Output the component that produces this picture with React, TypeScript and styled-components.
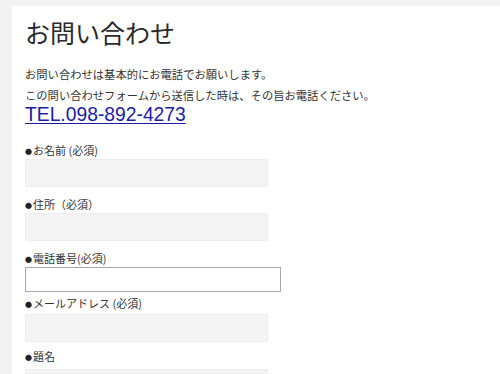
import React from "react";
import styled, { createGlobalStyle } from "styled-components";

const GlobalStyle = createGlobalStyle`
  html, body {
    margin: 0;
    padding: 0;
    background: #f2f2f2;
  }
  body {
    font-family: "Noto Sans CJK JP", "Noto Sans", sans-serif;
    color: #333;
  }
`;

interface fieldProps {
  label: string;
  variant?: "plain" | "bordered";
  gap?: number;
  labelGap?: number;
}

const Field: React.FC<fieldProps> = ({ label, variant = "plain", gap = 8, labelGap = 0 }) => {
  return (
    <FieldDiv $gap={gap}>
      <Label $gap={labelGap}>
        <Bullet>●</Bullet>
        {label}
      </Label>
      <Input type="text" $variant={variant} />
    </FieldDiv>
  );
};

const App: React.FC = () => {
  return (
    <>
      <GlobalStyle />
      <Panel>
        <Title>お問い合わせ</Title>
        <Lead>
          <p>お問い合わせは基本的にお電話でお願いします。</p>
          <p>この問い合わせフォームから送信した時は、その旨お電話ください。</p>
        </Lead>
        <Tel href="#">TEL.098-892-4273</Tel>
        <Form>
          <Field label="お名前 (必須)" />
          <Field label="住所（必須）" />
          <Field label="電話番号(必須)" variant="bordered" gap={2} />
          <Field label="メールアドレス (必須)" gap={5} labelGap={2} />
          <Field label="題名" labelGap={4} />
        </Form>
      </Panel>
    </>
  );
};

export default App;

const Panel = styled.div`
  box-sizing: border-box;
  margin: 6px 0 0 12px;
  padding: 11px 13px 20px;
  background: #fff;
  min-height: 368px;
`;

const Title = styled.h1`
  margin: 0;
  font-size: 25px;
  line-height: 30px;
  font-weight: 400;
  color: #2a2a2a;
`;

const Lead = styled.div`
  margin-top: 17px;
  p {
    margin: 0;
    font-size: 11.3px;
    line-height: 21px;
    color: #333;
  }
`;

const Tel = styled.a`
  display: block;
  font-family: "Liberation Sans", Arial, sans-serif;
  font-size: 19.3px;
  line-height: 18px;
  color: #1c1ca6;
  text-decoration: underline;
  text-underline-offset: 2px;
`;

const Form = styled.form`
  display: flex;
  flex-direction: column;
  margin-top: 17px;
`;

const FieldDiv = styled.div<{ $gap: number }>`
  display: flex;
  flex-direction: column;
  margin-bottom: ${(p) => p.$gap}px;
`;

const Label = styled.label<{ $gap: number }>`
  display: block;
  height: 18px;
  overflow: hidden;
  margin-bottom: ${(p) => p.$gap}px;
  font-size: 11px;
  line-height: 18px;
  color: #333;
`;

const Bullet = styled.span`
  font-size: 7px;
  line-height: 0;
  vertical-align: 1px;
  margin-right: 1px;
  color: #222;
`;

const Input = styled.input<{ $variant: "plain" | "bordered" }>`
  box-sizing: border-box;
  font-family: inherit;
  outline: none;
  ${(p) =>
    p.$variant === "bordered"
      ? `
    width: 256px;
    height: 25px;
    background: #fff;
    border: 1px solid #a9a9a9;
  `
      : `
    width: 243px;
    height: 28px;
    background: #f4f4f4;
    border: 1px solid #ededed;
    border-radius: 2px;
  `}
`;
